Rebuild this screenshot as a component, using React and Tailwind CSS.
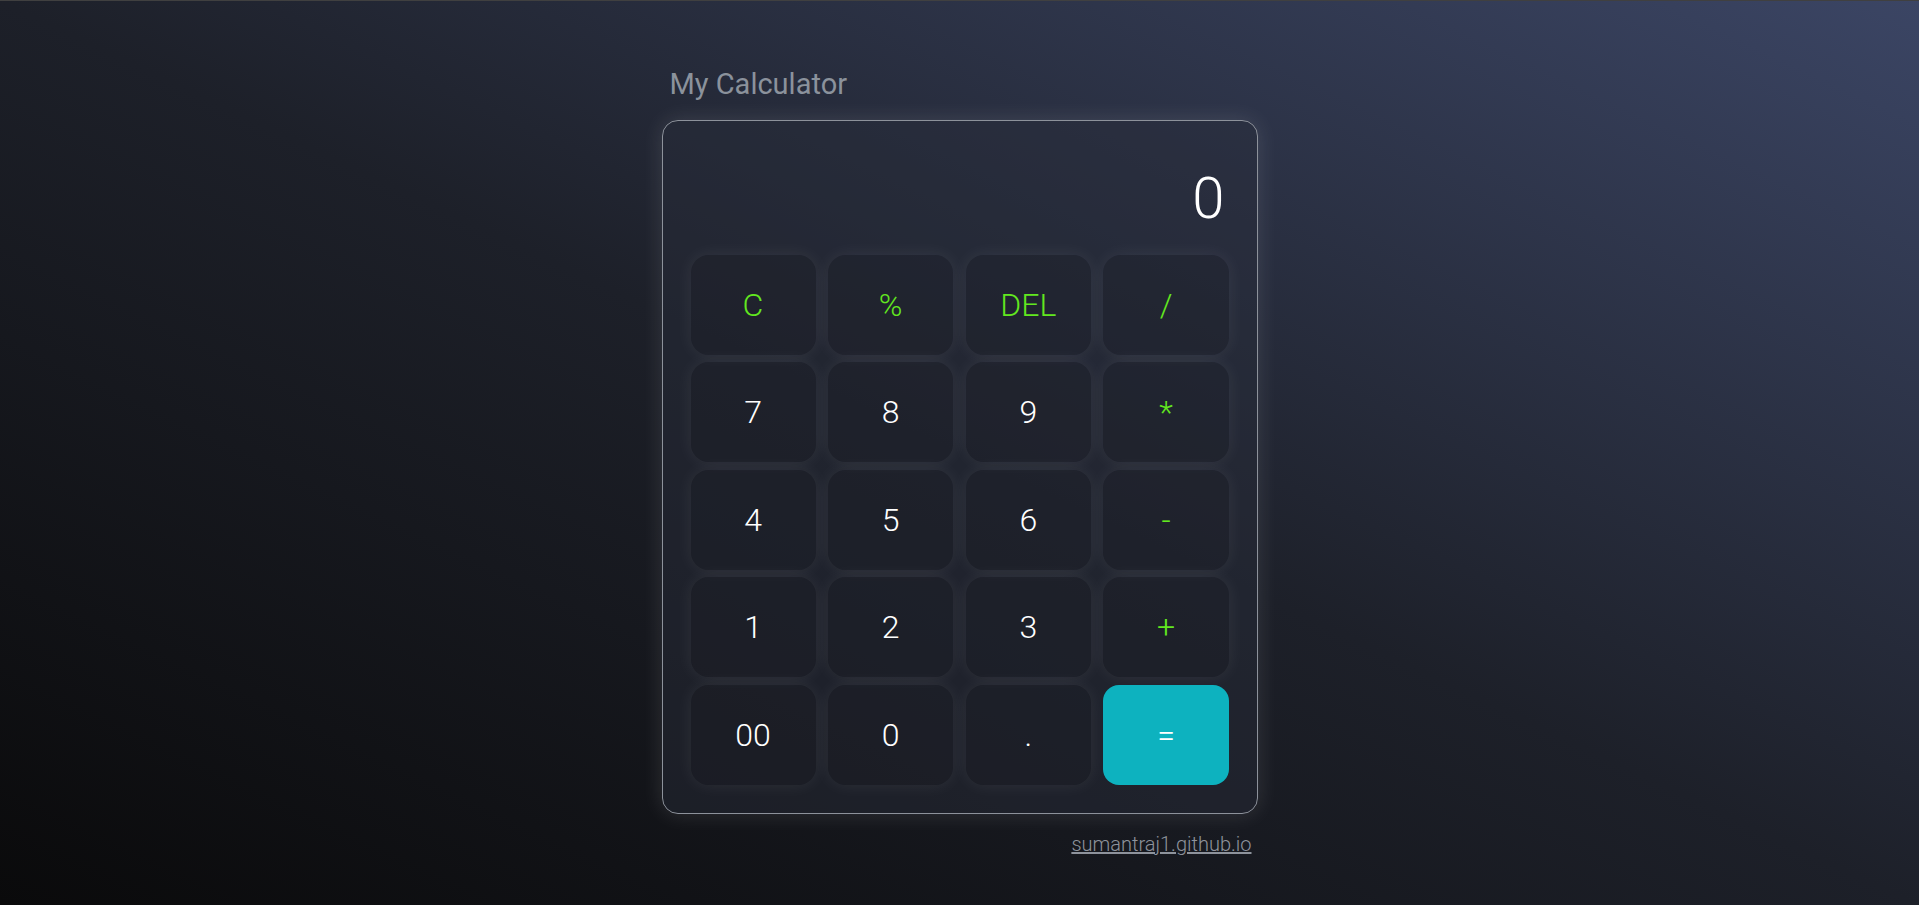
const keys = [
  { label: "C", op: true },
  { label: "%", op: true },
  { label: "DEL", op: true },
  { label: "/", op: true },
  { label: "7" },
  { label: "8" },
  { label: "9" },
  { label: "*", op: true },
  { label: "4" },
  { label: "5" },
  { label: "6" },
  { label: "-", op: true },
  { label: "1" },
  { label: "2" },
  { label: "3" },
  { label: "+", op: true },
  { label: "00" },
  { label: "0" },
  { label: "." },
  { label: "=", equal: true },
];

export default function App() {
  return (
    <div
      className="min-h-screen border-t border-[#404040] bg-[linear-gradient(to_top_right,#0a0a0b_0%,#1d2029_50%,#3b4564_100%)] flex flex-col items-center pt-[66px]"
      style={{ fontFamily: "Roboto, 'Noto Sans', sans-serif" }}
    >
      <div className="w-[596px]">
        {/* Title */}
        <h1 className="px-2 text-[29px] leading-[1.172] font-normal text-[#8b929c] mb-[19px]">
          My Calculator
        </h1>

        {/* Calculator body */}
        <div className="rounded-[16px] border border-[#8d929b] bg-[rgba(40,44,58,0.45)] shadow-[0_0_22px_rgba(255,255,255,0.12)] px-[28px] pt-[28px] pb-[28px]">
          <div className="h-[99px] flex items-center justify-end pr-1 text-[58px] font-light text-white">
            0
          </div>
          <div className="mt-[7px] grid grid-cols-4 gap-x-[12.67px] gap-y-[7.5px]">
            {keys.map((k) => (
              <button
                key={k.label}
                className={
                  k.equal
                    ? "h-[100px] rounded-[16px] bg-[#0db2bf] text-white text-[32px] font-light flex items-center justify-center"
                    : k.op
                    ? "h-[100px] rounded-[18px] bg-[rgba(18,20,26,0.2)] shadow-[0_0_18px_rgba(255,255,255,0.075)] text-[#62e81f] text-[32px] font-light flex items-center justify-center"
                    : "h-[100px] rounded-[18px] bg-[rgba(18,20,26,0.2)] shadow-[0_0_18px_rgba(255,255,255,0.075)] text-white text-[32px] font-light flex items-center justify-center"
                }
              >
                {k.label}
              </button>
            ))}
          </div>
        </div>

        {/* Footer link */}
        <div className="mt-[15px] px-1.5 text-right">
          <a href="#" className="text-[20px] font-light text-[#8e939c] underline">
            sumantraj1.github.io
          </a>
        </div>
      </div>
    </div>
  );
}
